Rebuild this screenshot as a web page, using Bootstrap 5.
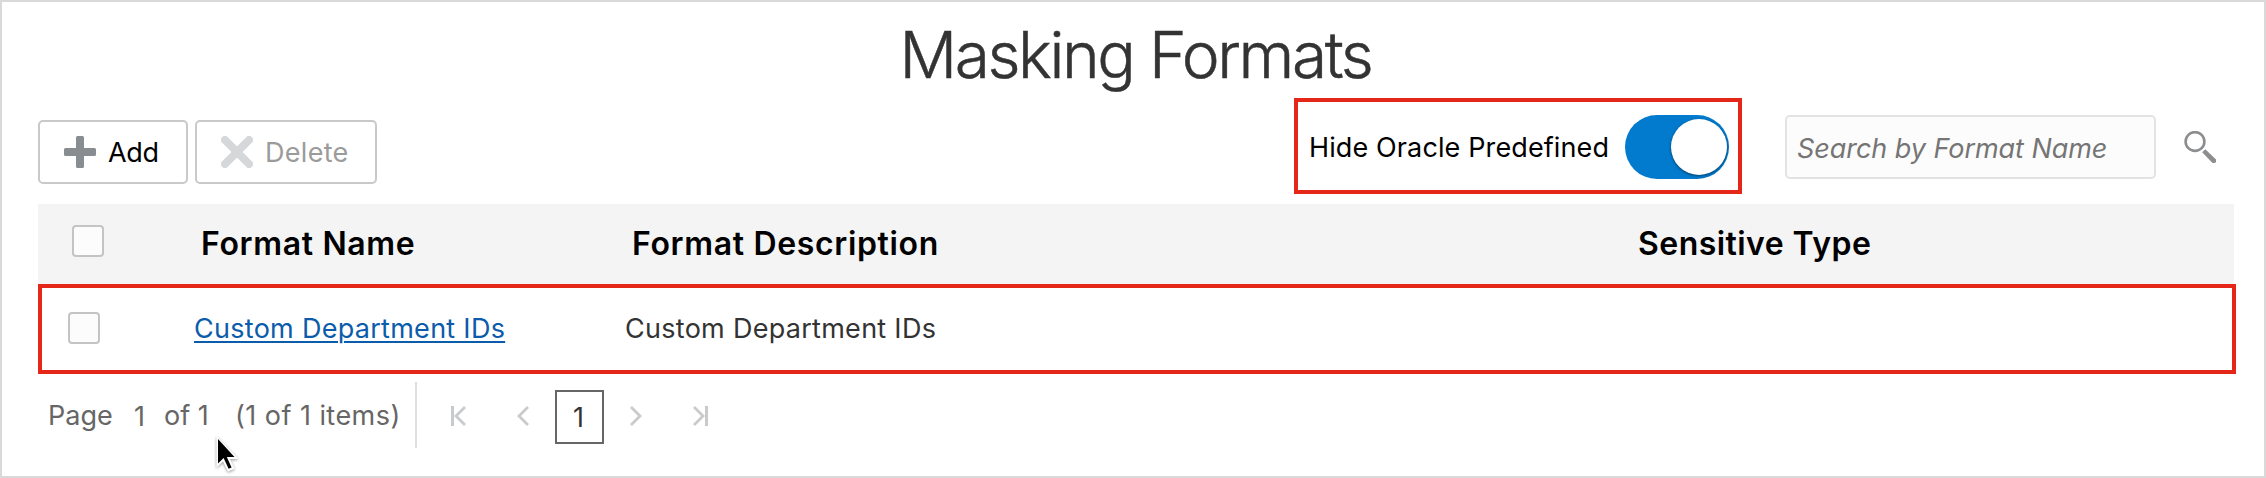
<!DOCTYPE html>
<html lang="en">
<head>
<meta charset="utf-8">
<title>Masking Formats</title>
<link href="https://cdn.jsdelivr.net/npm/bootstrap@5.3.0/dist/css/bootstrap.min.css" rel="stylesheet">
<style>
body{font-family:Inter,"Liberation Sans",sans-serif;font-size:27px;line-height:34px;color:#333;background:#fff}
.frame{width:2266px;height:478px;border:2px solid #d9d9d9;padding:0 28px 0 36px;overflow:hidden}
.page-title{font-size:64px;font-weight:300;-webkit-text-stroke:.5px #333;line-height:76px;height:96px;padding:15px 3px 0 0;letter-spacing:-2.4px;color:#333}
.toolbar{height:106px;padding-right:20px}
.tool-btn{height:64px;margin-top:22px;border:2px solid #c9c9c9;border-radius:5px;font-size:27px;line-height:34px;padding:2px 24px 0;color:#000;--bs-btn-disabled-color:#9b9b9b;--bs-btn-disabled-border-color:#c9c9c9;--bs-btn-disabled-opacity:1}
.tool-btn svg{margin-right:12px;margin-top:-2px;flex:none}
.add-btn{width:150px;letter-spacing:-.3px}
.del-btn{width:182px;margin-left:7px;letter-spacing:.3px}
.callout{border:4px solid #e42718}
.hide-box{width:448px;height:96px;padding:2px 9px 0 11px;color:#000;letter-spacing:.12px}
.hide-label{padding-top:1px}
.switch-shell{width:104px;height:64px;border-radius:32px;background:#027bce}
.switch-knob{width:56px;height:56px;background:#fff;margin-right:2px;box-shadow:0 1px 3px rgba(0,0,0,.5)}
.search-input.form-control{width:371px;height:64px;margin:17px 0 0 43px;border:2px solid #e3e3e3;border-radius:5px;background:#fcfcfc;font-size:27px;padding:2px 10px 0;letter-spacing:-.05px}
.search-input::placeholder{color:#757575;font-style:italic;opacity:1}
.search-icon{margin:33px 0 0 28px}
.grid-line{display:grid;align-items:center}
.grid-head{grid-template-columns:163px 431px 1006px 1fr;width:2196px;height:80px;background:#f4f4f4;color:#000;font-size:32px;font-weight:600;letter-spacing:.65px}
.grid-row{grid-template-columns:152px 431px 1006px 1fr;width:2198px;height:90px;letter-spacing:.28px}
.tick.form-check-input{width:32px;height:32px;border:2px solid #c4c4c4;border-radius:4px;background:#fcfcfc;display:block}
.grid-head .tick{margin:0 0 6px 34px}
.grid-row .tick{margin:0 0 2px 26px}
.type-col{letter-spacing:.45px}
.fmt-link{color:#0b5cab;text-decoration-thickness:2px;text-underline-offset:3px}
.pager{height:66px;margin-top:8px;color:#666}
.pager-info{display:grid;grid-template-columns:86px 30px 71px 180px;padding-left:10px;padding-top:3px}
.pager-now{padding-top:1px}
.pager-items{letter-spacing:.45px;white-space:nowrap}
.pager-rule{width:2px;height:66px;background:#dedede}
.page-nav{height:54px;margin-top:4px}
.page-nav svg{flex:none;margin-top:-3px}
.page-now{width:49px;height:54px;border:2px solid #666;color:#333;line-height:52px;margin:0 26px;padding-right:2px}
.first-icon{margin-left:34px}
.prev-icon,.last-icon{margin-left:51px}
.pointer{left:212px;top:433px}
</style>
</head>
<body>
<main class="frame position-relative">
  <h1 class="page-title text-center m-0">Masking Formats</h1>
  <div class="toolbar d-flex align-items-start">
    <button class="btn tool-btn add-btn d-flex align-items-center"><svg width="32" height="32" viewBox="0 0 32 32"><path d="M13.5 0h5q1.5 0 1.5 1.5V12h10.5q1.5 0 1.5 1.5v5q0 1.5-1.5 1.5H20v10.5q0 1.5-1.5 1.5h-5q-1.5 0-1.5-1.5V20H1.5Q0 20 0 18.5v-5Q0 12 1.5 12H12V1.5Q12 0 13.5 0z" fill="#878d91"/></svg>Add</button>
    <button class="btn tool-btn del-btn d-flex align-items-center" disabled><svg width="32" height="32" viewBox="0 0 32 32"><path d="M4 4l24 24M28 4L4 28" stroke="#d5d7d8" stroke-width="8" stroke-linecap="round"/></svg>Delete</button>
    <div class="callout hide-box ms-auto d-flex align-items-center justify-content-between">
      <span class="hide-label">Hide Oracle Predefined</span>
      <span class="switch-shell d-flex align-items-center justify-content-end" role="switch" aria-checked="true"><span class="switch-knob rounded-circle"></span></span>
    </div>
    <input class="form-control search-input" type="text" placeholder="Search by Format Name" aria-label="Search by Format Name">
    <svg class="search-icon" width="32" height="32" viewBox="0 0 32 32"><circle cx="11" cy="10.5" r="9.4" fill="none" stroke="#8b8d8f" stroke-width="2.6"/><path d="M18.2 21.3l3.1-3.1L32 28.5V31q-.5 1-2 1h-1.5z" fill="#8b8d8f"/></svg>
  </div>
  <div class="grid-line grid-head">
    <div><input class="form-check-input tick" type="checkbox" aria-label="Select all"></div>
    <div>Format Name</div>
    <div>Format Description</div>
    <div class="type-col">Sensitive Type</div>
  </div>
  <div class="grid-line grid-row callout">
    <div><input class="form-check-input tick" type="checkbox" aria-label="Select row"></div>
    <div><a class="fmt-link" href="#">Custom Department IDs</a></div>
    <div>Custom Department IDs</div>
    <div></div>
  </div>
  <nav class="pager d-flex align-items-center" aria-label="Pagination">
    <div class="pager-info"><span>Page</span><span class="pager-now">1</span><span>of 1</span><span class="pager-items">(1 of 1 items)</span></div>
    <span class="pager-rule"></span>
    <div class="page-nav d-flex align-items-center">
      <svg class="first-icon" width="15" height="20" viewBox="0 0 15 20"><path d="M1.5 0v20" stroke="#c8cacb" stroke-width="3"/><path d="M14 1L5 10l9 9" fill="none" stroke="#c8cacb" stroke-width="2.8"/></svg>
      <svg class="prev-icon" width="12" height="20" viewBox="0 0 12 20"><path d="M11 1L2 10l9 9" fill="none" stroke="#c8cacb" stroke-width="2.8"/></svg>
      <span class="page-now text-center">1</span>
      <svg width="12" height="20" viewBox="0 0 12 20"><path d="M1 1l9 9-9 9" fill="none" stroke="#c8cacb" stroke-width="2.8"/></svg>
      <svg class="last-icon" width="16" height="20" viewBox="0 0 16 20"><path d="M13.5 0v20" stroke="#c8cacb" stroke-width="3"/><path d="M1 1l9 9-9 9" fill="none" stroke="#c8cacb" stroke-width="2.8"/></svg>
    </div>
  </nav>
  <svg class="pointer position-absolute" width="28" height="42" viewBox="0 0 28 42"><path d="M2.5 1v31.5l6.5-6 5 10 6.5-2.8-4.500-9.700h8.500z" fill="#fff" style="filter:drop-shadow(0 1px 1.5px rgba(0,0,0,.4))"/><path d="M4 4v24.500l5.600-5.500 5 10.700 3-1.300-4.800-10.400h7.700z" fill="#000"/></svg>
</main>
<script src="https://cdn.jsdelivr.net/npm/bootstrap@5.3.0/dist/js/bootstrap.bundle.min.js"></script>
</body>
</html>
